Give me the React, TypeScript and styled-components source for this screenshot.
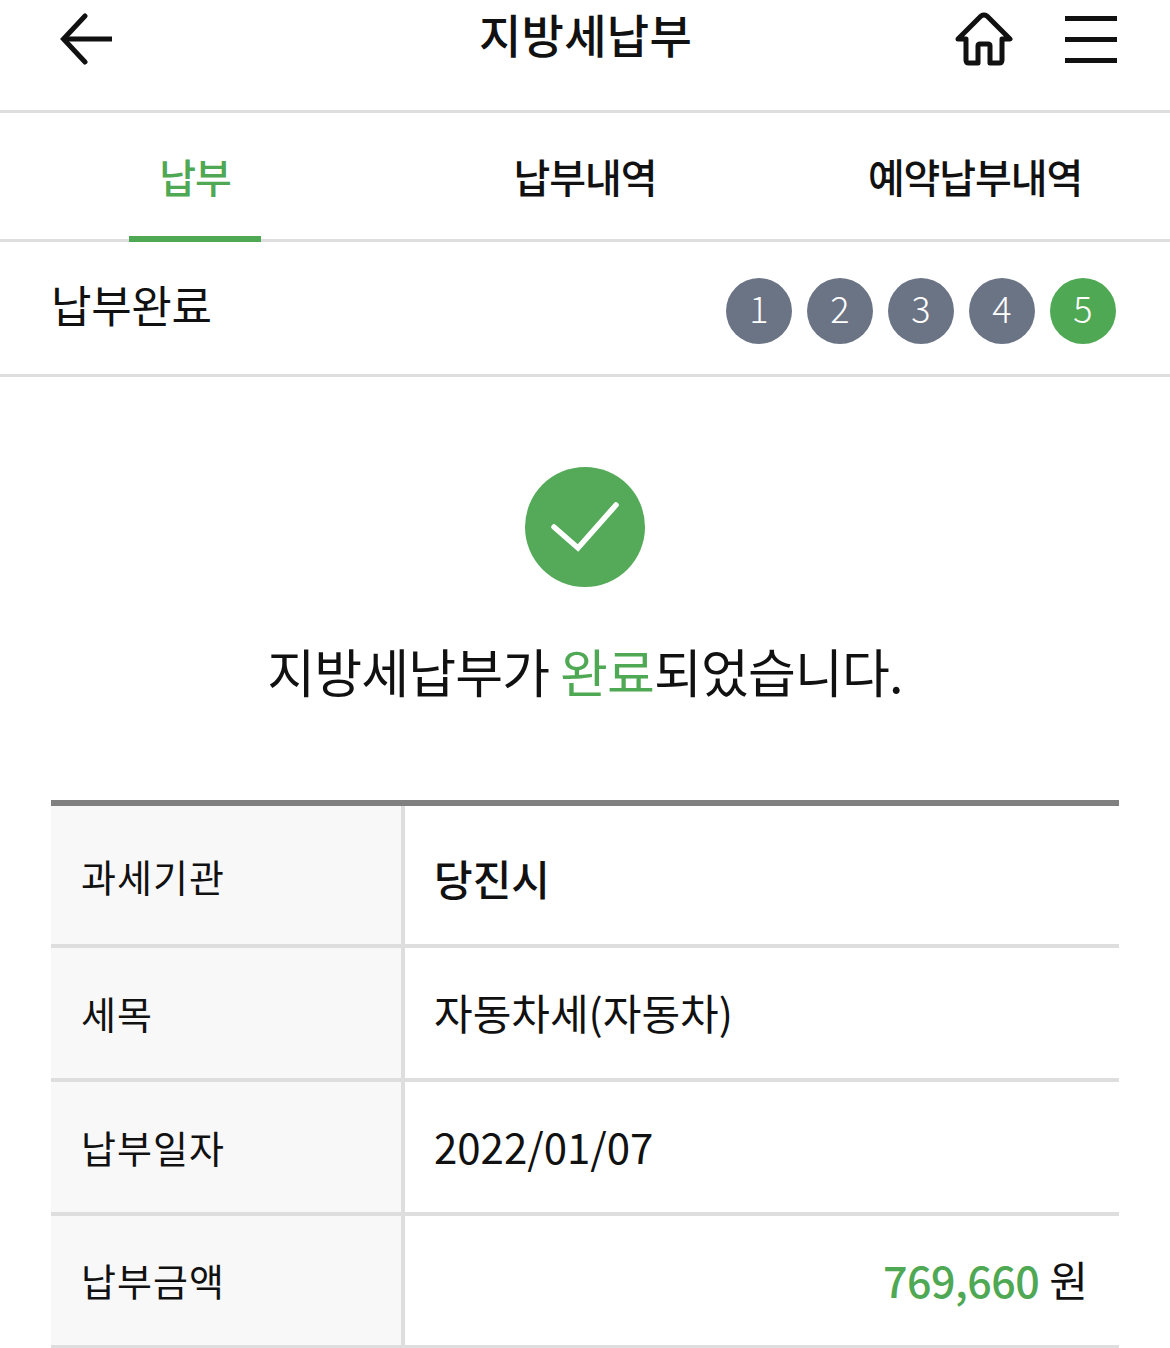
import React from "react"
import styled, { createGlobalStyle } from "styled-components"

const GlobalStyle = createGlobalStyle`
  html, body {
    margin: 0;
    padding: 0;
    background: #fff;
    font-family: "Noto Sans CJK KR", "Noto Sans", sans-serif;
    color: #111;
  }
  * { box-sizing: border-box; }
`

const GREEN = "#4fa853"

const Page = styled.div`
  width: 1170px;
  height: 1348px;
  overflow: hidden;
`

const Header = styled.header`
  height: 113px;
  border-bottom: 3px solid #dedede;
  display: grid;
  grid-template-columns: 1fr auto 1fr;
  padding: 0 53px 0 54px;
`

const IconButton = styled.button`
  border: 0;
  background: none;
  padding: 0 0 0 6px;
  display: flex;
  height: 78px;
  align-items: center;
`

const HeaderRight = styled.div`
  display: flex;
  justify-content: flex-end;
  align-items: center;
  height: 78px;
  gap: 52px;
`

const Title = styled.h1`
  margin: 0;
  font-size: 46px;
  font-weight: 500;
  line-height: 67px;
  letter-spacing: 0.3px;
`

const Tabs = styled.nav`
  height: 129px;
  border-bottom: 3px solid #dedede;
  display: grid;
  grid-template-columns: repeat(3, 390px);
`

const Tab = styled.div<{ $active?: boolean }>`
  display: flex;
  justify-content: center;
  position: relative;
  height: 129px;
  padding-top: 34px;
  font-size: 40px;
  line-height: 58px;
  letter-spacing: -1.1px;
  font-weight: 500;
  color: ${(props) => (props.$active ? GREEN : "#111")};
`

const TabBar = styled.span`
  position: absolute;
  left: 129px;
  bottom: 0;
  width: 132px;
  height: 6px;
  background: ${GREEN};
`

const StepRow = styled.section`
  height: 135px;
  border-bottom: 3px solid #dedede;
  display: flex;
  justify-content: space-between;
  padding: 36px 54px 0 51px;
`

const StepTitle = styled.h2`
  margin: -2px 0 0;
  font-size: 44px;
  line-height: 56px;
  font-weight: 400;
  letter-spacing: -0.3px;
`

const Steps = styled.ol`
  list-style: none;
  margin: 0;
  padding: 0;
  display: flex;
  gap: 15px;
`

const Step = styled.li<{ $current?: boolean }>`
  width: 66px;
  height: 66px;
  border-radius: 50%;
  display: flex;
  align-items: center;
  justify-content: center;
  padding-bottom: 8px;
  color: #fff;
  font-size: 36px;
  font-weight: 300;
  background: ${(props) => (props.$current ? GREEN : "#6b7485")};
`

const Done = styled.section`
  display: flex;
  flex-direction: column;
  align-items: center;
  padding-top: 90px;
  height: 423px;
`

const Message = styled.p`
  margin: 47px 0 0;
  font-size: 52px;
  line-height: 74px;
  font-weight: 400;
  letter-spacing: -0.85px;
  color: #111;
`

const Accent = styled.span`
  color: ${GREEN};
`

const Table = styled.dl`
  margin: 0 51px;
  border-top: 6px solid #808080;
`

const Row = styled.div<{ $height: number }>`
  display: grid;
  grid-template-columns: 354px 1fr;
  height: ${(props) => props.$height}px;
  border-bottom: 4px solid #dedede;
`

const Label = styled.dt<{ $first?: boolean }>`
  background: #f8f8f8;
  border-right: 4px solid #dedede;
  margin: 0;
  padding: ${(props) => (props.$first ? "0" : "0 0 2px")};
  padding-left: 30px;
  font-size: 38px;
  display: flex;
  align-items: center;
  letter-spacing: 1px;
`

const Value = styled.dd<{ $strong?: boolean; $right?: boolean }>`
  margin: 0;
  padding: ${(props) => (props.$strong ? "4px 31px 0 29px" : "0 31px 4px 29px")};
  font-size: 42px;
  display: flex;
  align-items: center;
  font-weight: ${(props) => (props.$strong ? 500 : 400)};
  justify-content: ${(props) => (props.$right ? "flex-end" : "flex-start")};
`

const Amount = styled.span`
  color: ${GREEN};
  font-weight: 500;
  font-size: 43px;
  letter-spacing: -0.5px;
  margin-right: 10px;
`

const BackIcon = () => (
  <svg width="52" height="52" viewBox="0 0 52 52" fill="none" stroke="#111" strokeWidth="5">
    <path d="M52 26H4" />
    <path d="M25 3 3.5 26 25 49" strokeLinecap="round" />
  </svg>
)

const HomeIcon = () => (
  <svg width="58" height="54" viewBox="0 0 58 54" fill="none" stroke="#111" strokeWidth="5" strokeLinejoin="round" strokeLinecap="round">
    <path d="M3 27 26 4q3-2 6 0l23 23H47v21q0 3-3 3H35V34q0-2-2-2H25q-2 0-2 2v17H14q-3 0-3-3V27Z" />
  </svg>
)

const MenuIcon = () => (
  <svg width="52" height="48" viewBox="0 0 52 48">
    <rect y="1" width="52" height="5" fill="#111" />
    <rect y="22" width="52" height="5" fill="#111" />
    <rect y="43" width="52" height="5" fill="#111" />
  </svg>
)

const CheckCircle = () => (
  <svg width="120" height="120" viewBox="0 0 120 120">
    <circle cx="60" cy="60" r="60" fill="#54aa58" />
    <path d="M29 60 53 81 91 38" fill="none" stroke="#fff" strokeWidth="5.5" strokeLinecap="round" />
  </svg>
)

const App = () => (
  <Page>
    <GlobalStyle />
    <Header>
      <IconButton aria-label="back">
        <BackIcon />
      </IconButton>
      <Title>지방세납부</Title>
      <HeaderRight>
        <HomeIcon />
        <MenuIcon />
      </HeaderRight>
    </Header>
    <Tabs>
      <Tab $active>
        납부
        <TabBar />
      </Tab>
      <Tab>납부내역</Tab>
      <Tab>예약납부내역</Tab>
    </Tabs>
    <StepRow>
      <StepTitle>납부완료</StepTitle>
      <Steps>
        {[1, 2, 3, 4, 5].map((n) => (
          <Step key={n} $current={n === 5}>
            {n}
          </Step>
        ))}
      </Steps>
    </StepRow>
    <Done>
      <CheckCircle />
      <Message>
        지방세납부가 <Accent>완료</Accent>되었습니다.
      </Message>
    </Done>
    <Table>
      <Row $height={142}>
        <Label $first>과세기관</Label>
        <Value $strong>당진시</Value>
      </Row>
      <Row $height={134}>
        <Label>세목</Label>
        <Value>자동차세(자동차)</Value>
      </Row>
      <Row $height={134}>
        <Label>납부일자</Label>
        <Value>2022/01/07</Value>
      </Row>
      <Row $height={133}>
        <Label>납부금액</Label>
        <Value $right>
          <Amount>769,660</Amount> 원
        </Value>
      </Row>
    </Table>
  </Page>
)

export default App
